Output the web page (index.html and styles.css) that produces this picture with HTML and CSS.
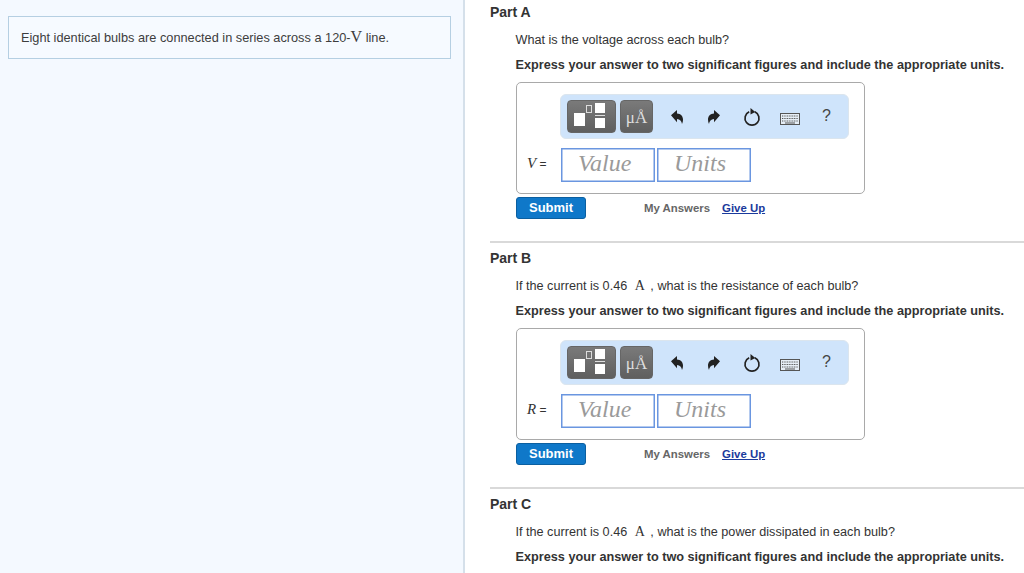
FILE: index.html
```html
<!DOCTYPE html>
<html lang="en">
<head>
<meta charset="utf-8">
<title>Eight identical bulbs</title>
<link rel="stylesheet" href="styles.css">
</head>
<body>
<svg class="defs" width="0" height="0" aria-hidden="true">
  <defs>
    <symbol id="undo" viewBox="0 0 14 16"><path d="M1 6.200 7 1v3.400c3.600.1 6 2.500 6 6.100 0 1.800-.4 3.200-1 4.500-.4-3-2-5-5-5.100v3.400z"/></symbol>
    <symbol id="redo" viewBox="0 0 14 16"><path d="M13 6.200 7 1v3.400C3.400 4.500 1 6.900 1 10.500c0 1.800.4 3.200 1 4.500.4-3 2-5 5-5.100v3.400z"/></symbol>
    <symbol id="reset" viewBox="0 0 18 20"><path d="M6.200 4.800a7 7 0 1 0 5.600 0" fill="none" stroke="#222" stroke-width="1.700"/><path d="M7.500 1 12.300 5 7.500 7.500z" fill="#222"/></symbol>
    <symbol id="keys" viewBox="0 0 20 12"><rect x=".5" y=".5" width="19" height="11" fill="#e6eef6" stroke="#555"/><path d="M2 3h16M2 5.500h16M2 8h16" stroke="#555" stroke-width="1.200" stroke-dasharray="1 .7"/><path d="M5 10h10" stroke="#555"/></symbol>
  </defs>
</svg>
<div class="page">
  <aside class="side">
    <div class="intro">Eight identical bulbs are connected in series across a 120-<span class="unit">V</span> line.</div>
  </aside>
  <main class="main">
    <section class="part">
      <h2 class="part-title">Part A</h2>
      <div class="part-body">
        <p class="question">What is the voltage across each bulb?</p>
        <p class="express">Express your answer to two significant figures and include the appropriate units.</p>
        <div class="answer">
          <div class="toolbar">
            <div class="tool tool-wide"><span class="sq-big"></span><span class="sq-small"></span><span class="frac"><i></i><b></b><i></i></span></div>
            <div class="tool tool-unit"><span class="mu">μÅ</span></div>
            <svg class="ic ic-undo"><use href="#undo"/></svg>
            <svg class="ic ic-redo"><use href="#redo"/></svg>
            <svg class="ic ic-reset"><use href="#reset"/></svg>
            <svg class="ic ic-keys"><use href="#keys"/></svg>
            <span class="help">?</span>
          </div>
          <div class="inputs">
            <span class="var"><em>V</em> =</span>
            <span class="field">Value</span>
            <span class="field">Units</span>
          </div>
        </div>
        <div class="actions">
          <button class="submit">Submit</button>
          <span class="my">My Answers</span>
          <a class="giveup" href="#">Give Up</a>
        </div>
      </div>
    </section>
    <section class="part">
      <h2 class="part-title">Part B</h2>
      <div class="part-body">
        <p class="question">If the current is 0.46 <span class="unit unit-a">A</span> , what is the resistance of each bulb?</p>
        <p class="express">Express your answer to two significant figures and include the appropriate units.</p>
        <div class="answer">
          <div class="toolbar">
            <div class="tool tool-wide"><span class="sq-big"></span><span class="sq-small"></span><span class="frac"><i></i><b></b><i></i></span></div>
            <div class="tool tool-unit"><span class="mu">μÅ</span></div>
            <svg class="ic ic-undo"><use href="#undo"/></svg>
            <svg class="ic ic-redo"><use href="#redo"/></svg>
            <svg class="ic ic-reset"><use href="#reset"/></svg>
            <svg class="ic ic-keys"><use href="#keys"/></svg>
            <span class="help">?</span>
          </div>
          <div class="inputs">
            <span class="var"><em>R</em> =</span>
            <span class="field">Value</span>
            <span class="field">Units</span>
          </div>
        </div>
        <div class="actions">
          <button class="submit">Submit</button>
          <span class="my">My Answers</span>
          <a class="giveup" href="#">Give Up</a>
        </div>
      </div>
    </section>
    <section class="part">
      <h2 class="part-title">Part C</h2>
      <div class="part-body">
        <p class="question">If the current is 0.46 <span class="unit unit-a">A</span> , what is the power dissipated in each bulb?</p>
        <p class="express">Express your answer to two significant figures and include the appropriate units.</p>
      </div>
    </section>
  </main>
</div>
</body>
</html>
```
FILE: styles.css
```css
* { box-sizing: border-box; }
html, body { margin: 0; height: 100%; overflow: hidden; background: #fff; }
body { font-family: "Liberation Sans", Arial, sans-serif; color: #333; font-size: 12px; }
.defs { position: absolute; }
.page { display: flex; height: 573px; overflow: hidden; }
.side { width: 465px; flex: none; background: #f4f9ff; border-right: 2px solid #d5e0ea; padding: 16px 12px 0 8px; }
.intro { height: 43px; border: 1px solid #b5cfe2; padding: 12px 0 0 12px; font-size: 12.750px; line-height: 15px; color: #3d3d3d; background: #f6faff; }
.unit { font-family: "Liberation Serif", serif; font-size: 16px; }
.main { flex: 1; padding: 0 0 0 25px; min-width: 0; }
.part { height: 245.700px; border-bottom: 2px solid #d9d9d9; padding-top: 4px; }
.part:first-child { height: 243px; }
.part:last-child { height: auto; border-bottom: 0; }
.part + .part { padding-top: 7px; }
.part-title { margin: 0; font-size: 14px; line-height: 16px; font-weight: bold; color: #333; }
.part-body { padding-left: 25.500px; }
.question { margin: 11px 0 0; font-size: 12.650px; line-height: 18px; color: #333; white-space: nowrap; }
.unit-a { font-size: 14px; margin: 0 2px 0 4px; }
.express { margin: 7px 0 0; font-size: 12.700px; line-height: 18px; font-weight: bold; color: #333; white-space: nowrap; }
.answer { width: 349px; height: 112px; margin-top: 8px; margin-left: .5px; border: 1px solid #a9a9a9; border-radius: 5px; padding: 11px 0 0 43px; background: #fff; }
.toolbar { width: 289px; height: 45px; background: #cfe4fb; border: 1px solid #dbe5ee; border-radius: 6px; display: flex; align-items: center; padding-left: 6px; position: relative; }
.tool { height: 33px; background: linear-gradient(#7a7a7a, #5f5f5f); border: 1px solid #666; border-radius: 4px; position: relative; flex: none; }
.tool-wide { width: 49px; }
.tool-unit { width: 33px; margin-left: 4px; display: flex; align-items: center; justify-content: center; }
.sq-big { position: absolute; left: 6px; top: 12px; width: 11px; height: 13px; background: #fff; }
.sq-small { position: absolute; left: 18px; top: 4px; width: 6px; height: 8px; border: 1px solid #ddd; }
.frac { position: absolute; left: 27px; top: 2px; width: 10px; display: flex; flex-direction: column; gap: 1px; }
.frac i { display: block; height: 10px; background: #fff; }
.frac b { display: block; height: 1px; background: #ddd; margin: 1px 0; }
.mu { font-family: "Liberation Serif", serif; font-size: 17px; color: #ddd; position: relative; top: 1px; }
.ic { position: absolute; top: 14px; fill: #222; }
.ic-undo { left: 109px; width: 14px; height: 16px; }
.ic-redo { left: 146px; width: 14px; height: 16px; }
.ic-reset { left: 182px; width: 18px; height: 20px; top: 12px; }
.ic-keys { left: 219px; width: 20px; height: 12px; top: 18px; }
.help { position: absolute; left: 261px; top: 12px; font-size: 16px; line-height: 18px; color: #444; }
.inputs { display: flex; align-items: center; margin-top: 9px; margin-left: -34px; }
.var { width: 35px; padding-left: 1px; padding-bottom: 3px; font-size: 12px; white-space: nowrap; color: #333; }
.var em { font-family: "Liberation Serif", serif; font-size: 15px; }
.field { width: 94px; height: 34px; margin-right: 2px; border: 1px solid #6a96e0; box-shadow: inset 0 0 0 .5px #6a96e0; font-family: "Liberation Serif", serif; font-style: italic; font-size: 24px; line-height: 29px; color: #9a9a9a; padding-left: 16px; }
.actions { display: flex; align-items: center; margin-top: 2px; height: 23px; }
.submit { width: 70px; height: 22px; margin-left: .5px; padding: 0; background: #0f78c9; border: 1px solid #0b5fa0; border-radius: 3px; color: #fff; font: bold 13px "Liberation Sans", Arial, sans-serif; }
.my { margin-left: 58px; font-size: 11.400px; font-weight: bold; color: #666; }
.giveup { margin-left: 12px; font-size: 11.400px; font-weight: bold; color: #1a3a9c; }
```
